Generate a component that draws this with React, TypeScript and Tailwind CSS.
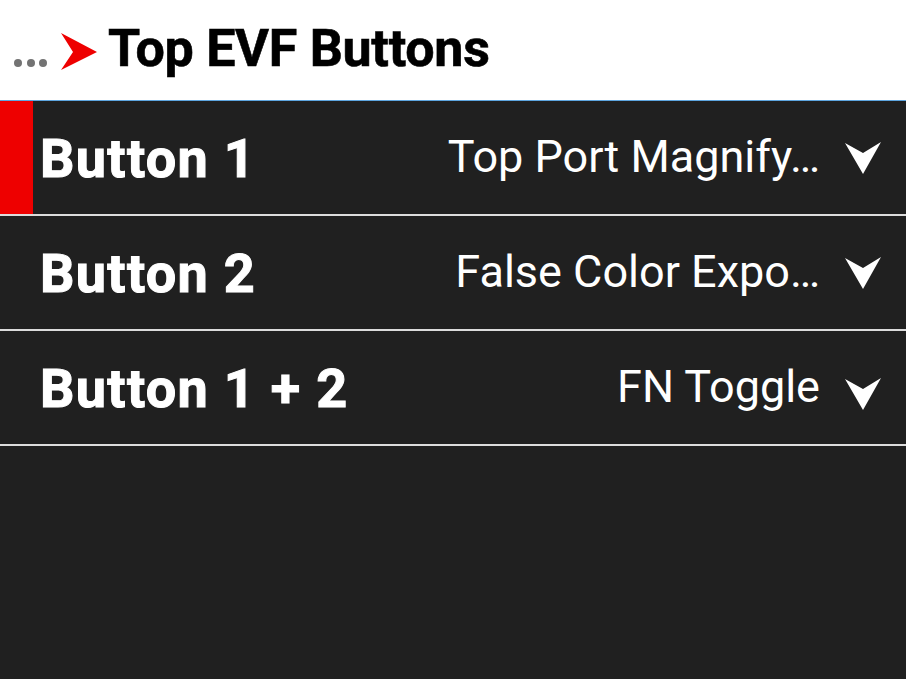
import React from "react";

const rows = [
  { label: "Button 1", value: "Top Port Magnify…", selected: true, dy: 0 },
  { label: "Button 2", value: "False Color Expo…", selected: false, dy: 0 },
  { label: "Button 1 + 2", value: "FN Toggle", selected: false, dy: 6 },
];

function Chevron({ dy }: { dy: number }) {
  return (
    <svg width="38" height="34" viewBox="0 0 38 34" style={{ transform: `translateY(${dy}px)` }}>
      <polygon points="1,2 19,12 37,1 19,33" fill="#ffffff" />
    </svg>
  );
}

export default function App() {
  return (
    <div
      className="w-[906px] h-[679px] flex flex-col bg-[#202020] overflow-hidden"
      style={{ fontFamily: "Roboto, 'Noto Sans', sans-serif" }}
    >
      <div className="h-[100px] bg-white flex items-center border-b border-[#5ea6e0] box-content">
        <div className="flex items-center gap-[4.5px] pl-[14px] mt-[26px]">
          <span className="w-[8px] h-[8px] rounded-full bg-[#737373]" />
          <span className="w-[8px] h-[8px] rounded-full bg-[#737373]" />
          <span className="w-[8px] h-[8px] rounded-full bg-[#737373]" />
        </div>
        <svg width="36" height="38" viewBox="0 0 36 38" className="ml-[14px] mt-[4px]">
          <polygon points="0,0 36,19 0,37 12,19" fill="#ee0000" />
        </svg>
        <div className="ml-[11px] text-[52px] font-bold text-black leading-none tracking-[-0.3px] mt-[-2px] [-webkit-text-stroke:0.6px_#000]">
          Top EVF Buttons
        </div>
      </div>
      {rows.map((r) => (
        <div key={r.label} className="flex flex-col">
          <div className="h-[113px] flex items-stretch">
            <div className={`w-[33px] ${r.selected ? "bg-[#ee0000]" : ""}`} />
            <div className="flex-1 flex items-center pl-[7px] pr-[24px]">
              <div className="text-[54px] font-bold text-white leading-none tracking-[1.3px] mt-[2px] [-webkit-text-stroke:1px_#fff]">
                {r.label}
              </div>
              <div className="ml-auto flex items-center">
                <div className="text-[45px] text-white leading-none mr-[24px] mt-[-2px]">{r.value}</div>
                <Chevron dy={r.dy} />
              </div>
            </div>
          </div>
          <div className="h-[2px] bg-[#dcdcdc]" />
        </div>
      ))}
    </div>
  );
}
